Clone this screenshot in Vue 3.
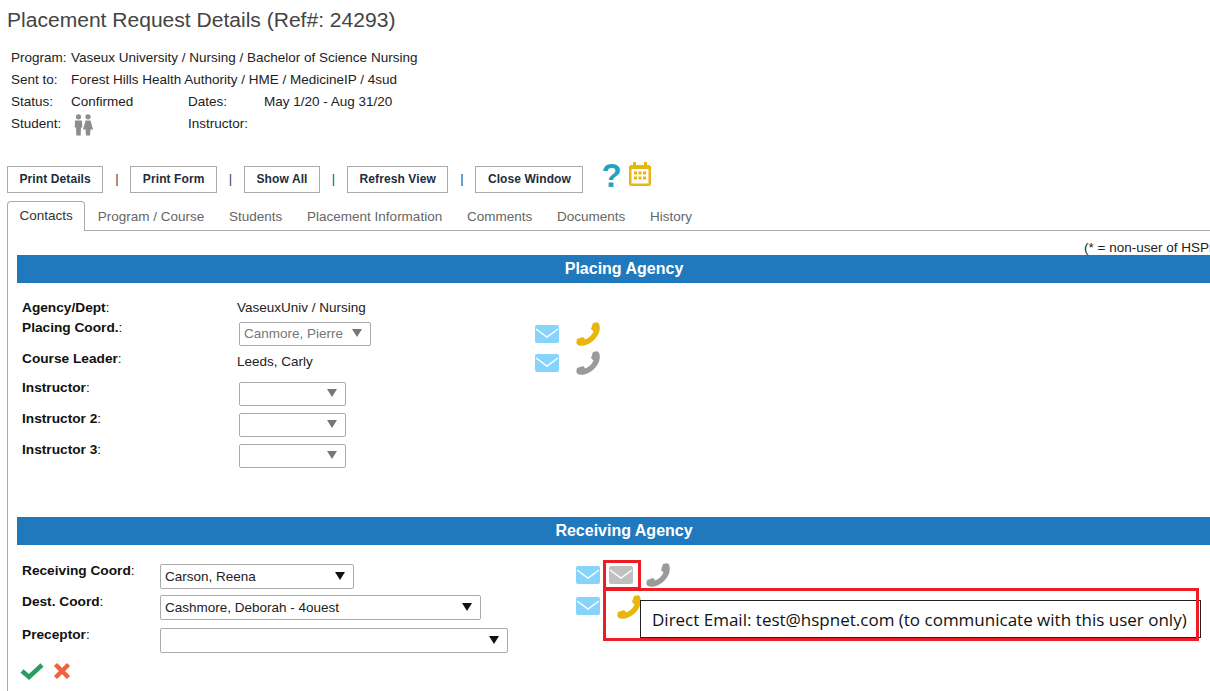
<script setup>
const phone = 'M15 7L17 1L21 .300Q23.800 1 23.800 6C23.800 15 14 23.800 5 23.800Q1 23.800 .300 20.500L1 17L7 15L9.500 17.500C13 16 16 13 17.500 9.500Z'
const buttons = ['Print Details', 'Print Form', 'Show All', 'Refresh View', 'Close Window']
const tabs = ['Program / Course', 'Students', 'Placement Information', 'Comments', 'Documents', 'History']
</script>

<template>
  <div class="page">
    <h1 class="title">Placement Request Details (Ref#: 24293)</h1>

    <div class="info">
      <span>Program:</span><span class="wide">Vaseux University / Nursing / Bachelor of Science Nursing</span>
      <span>Sent to:</span><span class="wide">Forest Hills Health Authority / HME / MedicineIP / 4sud</span>
      <span>Status:</span><span>Confirmed</span><span>Dates:</span><span>May 1/20 - Aug 31/20</span>
      <span>Student:</span>
      <span>
        <svg class="people" viewBox="0 0 19 22" fill="#8d8d8d">
          <circle cx="4.500" cy="2.800" r="2.600" /><path d="M1 6.500h7l.3 7H7l-.3 8H2.300l-.3-8H.7z" />
          <circle cx="14" cy="2.800" r="2.600" /><path d="M11.500 6.500h5l2.500 9h-2.500l-.5 6h-4l-.5-6H9z" />
        </svg>
      </span>
      <span>Instructor:</span><span></span>
    </div>

    <div class="toolbar">
      <template v-for="(b, i) in buttons" :key="b">
        <button class="btn">{{ b }}</button>
        <span v-if="i < 4" class="sep">|</span>
      </template>
      <span class="help">?</span>
      <svg class="cal" viewBox="0 0 22 24">
        <path fill="#e8b60d" d="M4 0h3v3h8V0h3v3h2a2 2 0 0 1 2 2v17a2 2 0 0 1-2 2H2a2 2 0 0 1-2-2V5a2 2 0 0 1 2-2h2z" />
        <rect x="2.500" y="7" width="17" height="14.500" fill="#fff" />
        <path fill="#e8b60d" d="M5 9.500h3v3H5zM9.500 9.500h3v3h-3zM14 9.500h3v3h-3zM5 14.500h3v3H5zM9.500 14.500h3v3h-3zM14 14.500h3v3h-3z" />
      </svg>
    </div>

    <div class="tabs">
      <span class="tab active">Contacts</span>
      <span v-for="t in tabs" :key="t" class="tab">{{ t }}</span>
    </div>

    <div class="panel">
      <div class="legend">(* = non-user of HSPnet)</div>
      <div class="bar">Placing Agency</div>

      <div class="placing">
        <div class="row">
          <span class="lbl"><b>Agency/Dept</b>:</span>
          <span class="val">VaseuxUniv / Nursing</span>
        </div>
        <div class="row r31">
          <span class="lbl"><b>Placing Coord.</b>:</span>
          <span class="cell"><span class="sel disabled w132"><span>Canmore, Pierre</span><i class="arrow"></i></span></span>
          <span class="icons">
            <svg class="mail" viewBox="0 0 24 18"><rect width="24" height="18" rx="2" fill="#86d4fb" /><path d="M1 4l11 8 11-8" fill="none" stroke="#fff" stroke-width="1.500" /></svg>
            <svg class="ph" viewBox="0 0 24 24"><path :d="phone" fill="#e8b60d" /></svg>
          </span>
        </div>
        <div class="row r29">
          <span class="lbl"><b>Course Leader</b>:</span>
          <span class="val down">Leeds, Carly</span>
          <span class="icons tight">
            <svg class="mail" viewBox="0 0 24 18"><rect width="24" height="18" rx="2" fill="#86d4fb" /><path d="M1 4l11 8 11-8" fill="none" stroke="#fff" stroke-width="1.500" /></svg>
            <svg class="ph" viewBox="0 0 24 24"><path :d="phone" fill="#9a9a9a" /></svg>
          </span>
        </div>
        <div v-for="n in ['Instructor', 'Instructor 2', 'Instructor 3']" :key="n" class="row r31">
          <span class="lbl"><b>{{ n }}</b>:</span>
          <span class="cell"><span class="sel disabled w107"><i class="arrow"></i></span></span>
        </div>
      </div>

      <div class="bar">Receiving Agency</div>

      <div class="receiving">
        <div class="rrow r31">
          <span class="lbl"><b>Receiving Coord</b>:</span>
          <span class="cell"><span class="sel w194"><span>Carson, Reena</span><i class="arrow"></i></span></span>
          <span class="icons">
            <svg class="mail" viewBox="0 0 24 18"><rect width="24" height="18" rx="2" fill="#86d4fb" /><path d="M1 4l11 8 11-8" fill="none" stroke="#fff" stroke-width="1.500" /></svg>
            <svg class="mail" viewBox="0 0 24 18"><rect width="24" height="18" rx="2" fill="#c0c0c0" /><path d="M1 4l11 8 11-8" fill="none" stroke="#fff" stroke-width="1.500" /></svg>
            <svg class="ph" viewBox="0 0 24 24"><path :d="phone" fill="#9a9a9a" /></svg>
          </span>
        </div>
        <div class="rrow r33">
          <span class="lbl"><b>Dest. Coord</b>:</span>
          <span class="cell"><span class="sel w321"><span>Cashmore, Deborah - 4ouest</span><i class="arrow"></i></span></span>
          <span class="icons">
            <svg class="mail" viewBox="0 0 24 18"><rect width="24" height="18" rx="2" fill="#86d4fb" /><path d="M1 4l11 8 11-8" fill="none" stroke="#fff" stroke-width="1.500" /></svg>
            <svg class="ph gold" viewBox="0 0 24 24"><path :d="phone" fill="#e8b60d" /></svg>
          </span>
        </div>
        <div class="rrow r33">
          <span class="lbl"><b>Preceptor</b>:</span>
          <span class="cell"><span class="sel w348"><i class="arrow"></i></span></span>
        </div>
        <div class="actions">
          <svg class="ok" viewBox="0 0 24 18"><path d="M2 9l7 6L22 3" fill="none" stroke="#2a9d62" stroke-width="4.500" /></svg>
          <svg class="no" viewBox="0 0 18 18"><path d="M2.500 2.500l13 13M15.500 2.500l-13 13" fill="none" stroke="#f4603c" stroke-width="4.500" /></svg>
        </div>
      </div>
    </div>

    <div class="tooltip">Direct Email: test@hspnet.com (to communicate with this user only)</div>
    <div class="mark mark-a"></div>
    <div class="mark mark-b"></div>
  </div>
</template>

<style scoped>
.page {
  position: relative;
  width: 1210px;
  height: 691px;
  overflow: hidden;
  font-family: "Liberation Sans", Arial, sans-serif;
  font-size: 13.500px;
  color: #222;
  background: #fff;
}
.title {
  margin: 0;
  padding: 8px 0 0 7px;
  font-size: 21.050px;
  font-weight: 400;
  line-height: 24px;
  color: #444;
}
.info {
  display: grid;
  grid-template-columns: 60px 117px 76px 1fr;
  grid-auto-rows: 22px;
  align-items: center;
  margin: 15px 0 0 11px;
  width: 500px;
  line-height: 22px;
  white-space: nowrap;
}
.info .wide { grid-column: 2 / 5; }
.people { display: block; width: 19px; height: 22px; margin: 1px 0 0 3px; }
.toolbar {
  display: flex;
  align-items: flex-start;
  height: 35px;
  margin: 31px 0 0 7px;
}
.btn {
  height: 27px;
  padding: 0 11.500px 1px;
  border: 1px solid #aaa;
  background: #fff;
  font: 700 12px "Liberation Sans", Arial, sans-serif;
  letter-spacing: 0.100px;
  color: #1d2d3e;
}
.sep {
  width: 27px;
  text-align: center;
  line-height: 26px;
  font-size: 13px;
  color: #2c4a5a;
}
.help {
  width: 20px;
  margin: -7px 0 0 18px;
  font-size: 33px;
  font-weight: 700;
  line-height: 34px;
  color: #1ea5c4;
}
.cal { width: 22px; height: 24px; margin: -4px 0 0 8px; }
.tabs {
  display: flex;
  height: 29px;
  margin-left: 7px;
}
.tab {
  padding: 7px 12.400px 0;
  line-height: 18px;
  color: #666;
}
.tab.active {
  position: relative;
  z-index: 1;
  height: 30px;
  box-sizing: border-box;
  padding: 5px 11.500px 0;
  border: 1px solid #aaa;
  border-bottom: 0;
  border-radius: 4px 4px 0 0;
  background: #fff;
  color: #333;
}
.panel {
  width: 1300px;
  height: 470px;
  margin-left: 7px;
  padding-left: 9px;
  box-sizing: border-box;
  border-top: 1px solid #aaa;
  border-left: 1px solid #aaa;
}
.legend {
  width: 1214px;
  height: 24px;
  padding: 9px 0 0 1067px;
  box-sizing: border-box;
  line-height: 16px;
  white-space: nowrap;
  color: #222;
}
.bar {
  width: 1214px;
  height: 28px;
  background: #2079bd;
  color: #fff;
  text-align: center;
  font-size: 16px;
  font-weight: 700;
  line-height: 28px;
}
.placing { padding: 16px 0 45px 5px; }
.row {
  display: grid;
  grid-template-columns: 215px 298px auto;
  align-items: start;
  line-height: 16px;
  min-height: 20px;
}
.r31 { height: 31px; }
.r29 { height: 29px; }
.r33 { height: 33px; }
.lbl { padding-top: 1px; color: #111; white-space: nowrap; }
.lbl b { font-size: 13.700px; }
.val { padding-top: 1px; color: #222; }
.val.down { margin-top: 3px; }
.cell { display: block; padding: 3px 0 0 2px; }
.icons {
  display: flex;
  align-items: flex-start;
  gap: 17px;
  padding-top: 6px;
}
.icons.tight { padding-top: 4px; }
.mail { display: block; width: 24px; height: 18px; }
.ph { display: block; width: 24px; height: 24px; margin-top: -3px; }
.sel {
  display: flex;
  align-items: center;
  justify-content: space-between;
  height: 25px;
  padding: 0 8px 0 4px;
  box-sizing: border-box;
  border: 1px solid #aaa;
  border-radius: 2px;
  background: #fff;
  color: #222;
}
.sel .arrow { margin: 0 0 2px auto; }
.disabled { color: #777; height: 24px; }
.w132 { width: 132px; }
.w107 { width: 107px; }
.w194 { width: 194px; }
.w321 { width: 321px; }
.w348 { width: 348px; }
.arrow {
  width: 0;
  height: 0;
  border-left: 5px solid transparent;
  border-right: 5px solid transparent;
  border-top: 8px solid #111;
}
.disabled .arrow { border-top-color: #777; }
.receiving { padding: 17px 0 0 5px; }
.rrow {
  display: grid;
  grid-template-columns: 138px 416px auto;
  align-items: start;
  line-height: 16px;
}
.rrow .cell { padding: 2px 0 0; }
.rrow .icons { gap: 9px; padding-top: 4px; }
.rrow .ph { margin-left: 4px; }
.rrow .ph.gold { margin-left: 8px; margin-top: -2px; }
.actions {
  display: flex;
  gap: 9px;
  margin: 3px 0 0 -2px;
  align-items: center;
}
.ok { width: 24px; height: 18px; }
.no { width: 18px; height: 18px; }
.tooltip {
  position: absolute;
  left: 640px;
  top: 600px;
  width: 561px;
  height: 38px;
  box-sizing: border-box;
  padding: 7px 0 0 11px;
  border: 1px solid #222;
  background: #fff;
  font-family: "Open Sans", sans-serif;
  font-size: 17px;
  line-height: 24px;
  white-space: nowrap;
  color: #111;
}
.mark {
  position: absolute;
  box-sizing: border-box;
  border: 3px solid #ee1c25;
}
.mark-a { left: 603px; top: 560px; width: 38px; height: 30px; }
.mark-b { left: 603px; top: 588px; width: 596px; height: 53px; }
</style>

<style>
html, body { margin: 0; overflow: hidden; background: #fff; }
</style>
